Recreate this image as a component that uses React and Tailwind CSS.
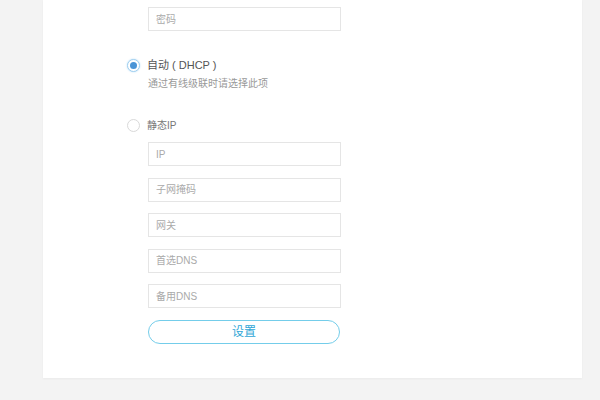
import { useState } from 'react';

const fontStack = { fontFamily: '"Liberation Sans", "Noto Sans CJK SC", sans-serif' };

// one bordered text field of the network form
function Field({ placeholder }) {
    return (
        <input
            type="text"
            placeholder={placeholder}
            className="block w-[193px] h-[24px] border border-[#e5e5e5] bg-white px-[7px] text-[10px] text-[#555] placeholder:text-[#aaa] outline-none"
            style={fontStack}
        />
    );
}

// radio dot drawn with css circles
function Radio({ checked }) {
    return (
        <span
            className={`flex items-center justify-center w-[13px] h-[13px] rounded-full border bg-white ${
                checked ? 'border-[#9fcff0] shadow-[0_0_2px_#b7dcf5]' : 'border-[#d9d9d9]'
            }`}
        >
            {checked && <span className="w-[7px] h-[7px] rounded-full bg-[#4a94d6]" />}
        </span>
    );
}

export default function App() {
    const [mode, setMode] = useState('dhcp');

    return (
        <div className="min-h-[400px] w-[600px] bg-[#f3f3f3] pb-[22px]" style={fontStack}>
            <div className="ml-[43px] w-[539px] h-[378px] bg-white shadow-[0_1px_2px_rgba(0,0,0,0.04)] pl-[85px] pt-[7px]">

                {/* password field of the previous section */}
                <div className="pl-[20px]">
                    <Field placeholder="密码" />
                </div>

                {/* automatic mode */}
                <button
                    onClick={() => setMode('dhcp')}
                    className="flex items-center gap-[7px] mt-[27px] h-[14px] -ml-[1px]"
                >
                    <Radio checked={mode === 'dhcp'} />
                    <span className="text-[11px] text-[#555]">自动 ( DHCP )</span>
                </button>
                <p className="pl-[20px] mt-[5px] text-[10px] leading-[14px] text-[#999]">
                    通过有线级联时请选择此项
                </p>

                {/* static mode */}
                <button
                    onClick={() => setMode('static')}
                    className="flex items-center gap-[7px] mt-[27px] h-[14px] -ml-[1px]"
                >
                    <Radio checked={mode === 'static'} />
                    <span className="text-[10px] text-[#777]">静态IP</span>
                </button>

                <div className="pl-[20px] mt-[10px] flex flex-col gap-[11.5px]">
                    <Field placeholder="IP" />
                    <Field placeholder="子网掩码" />
                    <Field placeholder="网关" />
                    <Field placeholder="首选DNS" />
                    <Field placeholder="备用DNS" />
                    <button className="w-[192px] h-[24px] rounded-full border border-[#74cdea] bg-white text-[12px] text-[#2fa6d6]">
                        设置
                    </button>
                </div>

            </div>
        </div>
    );
}
